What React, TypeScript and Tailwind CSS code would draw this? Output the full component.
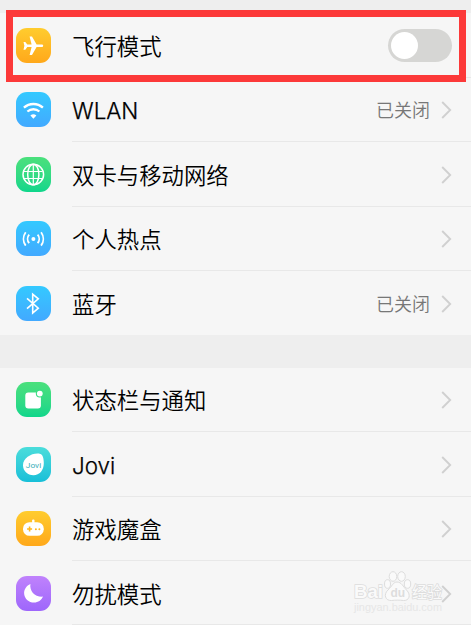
import type { ReactNode } from "react";

const white = "#ffffff";

function Plane() {
  return (
    <path
      fill={white}
      d="M27.2 17.8c0 .9-.7 1.300-1.600 1.300h-5l-4.600 7.900h-2.400l2-7.900h-4.300l-2 2.600H7.500l.9-3.900-.9-3.900h1.800l2 2.600h4.300l-2-7.900h2.400l4.600 7.900h5c.9 0 1.600.4 1.600 1.300z"
    />
  );
}

function Wifi() {
  return (
    <g fill="none" stroke={white} strokeWidth="2.3">
      <path d="M7.9 15.7a14 14 0 0 1 19 0" />
      <path d="M11.4 19.5a9.2 9.2 0 0 1 12 0" />
      <path d="M17.4 26.8l-3-3.2a4.4 4.4 0 0 1 6 0z" fill={white} stroke="none" />
    </g>
  );
}

function Globe() {
  return (
    <g fill="none" stroke={white} strokeWidth="1.5">
      <circle cx="17.3" cy="17.5" r="10.3" />
      <ellipse cx="17.3" cy="17.5" rx="5.6" ry="10.3" />
      <path d="M17.3 7.2v20.6M8 14.5h18.600M8 21.500h18.600" strokeWidth="1.2" />
    </g>
  );
}

function Hotspot() {
  return (
    <g fill="none" stroke={white} strokeWidth="1.8">
      <circle cx="17.4" cy="17.9" r="2" fill={white} stroke="none" />
      <path d="M13.2 13.7a6.4 6.4 0 0 0 0 8.4M21.6 13.7a6.4 6.4 0 0 1 0 8.4" />
      <path d="M9.7 11.2a11.4 11.4 0 0 0 0 13.4M25.1 11.2a11.4 11.4 0 0 1 0 13.4" />
    </g>
  );
}

function Bluetooth() {
  return <path d="M11 12.3l11.3 9.9-5.6 4.9V8.1l5.6 4.7L11 22.6" fill="none" stroke={white} strokeWidth="1.6" />;
}

function Notify() {
  return (
    <g>
      <rect x="9.3" y="10.4" width="15.6" height="16.2" rx="3" fill={white} />
      <circle cx="23.8" cy="11.6" r="4" fill="#3bdc82" />
      <circle cx="23.8" cy="11.6" r="2.9" fill={white} />
    </g>
  );
}

function Jovi() {
  return (
    <g>
      <path fill={white} d="M24.3 6.9c2.4.5 3.5 4.4 3.5 9.3 0 7-4.2 12-10.3 12S7 23.9 7 18.3C7 10.5 17 5.3 24.3 6.900z" />
      <text x="9.8" y="20.6" fontSize="6.8" textLength="15.400" lengthAdjust="spacingAndGlyphs" fill="#35aeb9" className="font-['Roboto',sans-serif] font-normal">
        Jovi
      </text>
    </g>
  );
}

function Gamepad() {
  return (
    <g>
      <rect x="7" y="11.2" width="20.8" height="13.6" rx="6.5" fill={white} />
      <rect x="16.1" y="8.6" width="2.4" height="4" rx="1" fill={white} />
      <path d="M13.6 15.5v5M11.1 18h5" stroke="#ffb71d" strokeWidth="1.6" />
      <circle cx="19.9" cy="18.2" r="1" fill="#ffb71d" />
      <circle cx="23.4" cy="18.2" r="1" fill="#ffb71d" />
    </g>
  );
}

function Moon() {
  return <path fill={white} d="M14.4 7.9c-1 7 4.2 13.2 12.6 12.7-1.5 3.7-4.9 6-8.8 6-5.5 0-10.1-4-10.1-9.6 0-4 2.5-7.5 6.3-9.1z" />;
}

const yellow = "from-[#ffcc2e] to-[#ffa81a]";
const blue = "from-[#33c9ff] to-[#42a9ff]";
const green = "from-[#4ae07c] to-[#0dd68b]";

type Item = { label: string; icon: ReactNode; tone: string; row: string; latin?: boolean; status?: string; toggle?: boolean };

const tall = "h-[65px] pt-[15px]";
const short = "h-16 pt-[14px]";

const network: Item[] = [
  { label: "飞行模式", icon: <Plane />, tone: yellow, row: tall, toggle: true },
  { label: "WLAN", icon: <Wifi />, tone: blue, row: short, latin: true, status: "已关闭" },
  { label: "双卡与移动网络", icon: <Globe />, tone: green, row: tall },
  { label: "个人热点", icon: <Hotspot />, tone: blue, row: short },
  { label: "蓝牙", icon: <Bluetooth />, tone: blue, row: "h-16 pt-[15px]", status: "已关闭" },
];

const system: Item[] = [
  { label: "状态栏与通知", icon: <Notify />, tone: green, row: short },
  { label: "Jovi", icon: <Jovi />, tone: "from-[#4adddb] to-[#16bfd8]", row: tall, latin: true },
  { label: "游戏魔盒", icon: <Gamepad />, tone: yellow, row: short },
  { label: "勿扰模式", icon: <Moon />, tone: "from-[#c082fc] to-[#9e66fb]", row: "h-16 pt-[15px]" },
];

function Row({ item, divider }: { item: Item; divider: boolean }) {
  return (
    <div className={`relative flex items-start pl-4 pr-5 ${item.row}`}>
      <div className={`size-[35px] shrink-0 overflow-hidden rounded-[11px] bg-linear-to-b ${item.tone}`}>
        <svg viewBox="0 0 35 35" className="size-full">{item.icon}</svg>
      </div>
      <div className="ml-[21px] flex h-[35px] flex-1 items-center">
        <span className={item.latin ? "pt-[3px] font-['Inter',sans-serif] text-[22.4px] font-light leading-8 text-black [-webkit-text-stroke:0.25px_black]" : "pb-0.5 text-[22.4px] font-[350] leading-8 text-black"}>
          {item.label}
        </span>
        <span className="ml-auto pb-px text-[18px] font-[350] leading-6 text-[#777]">{item.status}</span>
        {item.toggle ? (
          <span className="-mr-px flex h-[33px] w-16 items-center rounded-full bg-[#d6d6d4] pl-[2.5px]">
            <span className="size-[27px] rounded-full bg-white" />
          </span>
        ) : (
          <svg viewBox="0 0 11 18" className="-mr-px ml-[11px] h-[18px] w-[11px]">
            <path d="M1.2 1l8 8-8 8" fill="none" stroke="#d0d0d0" strokeWidth="1.9" />
          </svg>
        )}
      </div>
      {divider && <div className="absolute right-0 bottom-0 left-[72px] h-px bg-[#e8e8e8]" />}
    </div>
  );
}

function Watermark() {
  return (
    <div className="absolute top-[570px] left-[353px] h-[44px] w-[94px] font-['Liberation_Sans','Noto_Sans_CJK_SC',sans-serif]">
      <svg viewBox="0 0 94 44" className="size-full">
        <g fill="#fafafa" stroke="#dddddd" strokeWidth="1">
          <ellipse cx="34.500" cy="14" rx="3" ry="4.300" />
          <ellipse cx="40" cy="6.500" rx="3.800" ry="4.800" />
          <ellipse cx="48.500" cy="6.500" rx="3.800" ry="4.800" />
          <ellipse cx="54.500" cy="14" rx="3.200" ry="4.300" />
          <path d="M44 12c4.500 0 6 4.500 9.500 8 5 5 2.500 11-3 10.500-4-.5-8-.5-12 0-6 .5-8.500-6-3.500-10.500 4-3.500 5-8 9-8z" />
          <g strokeWidth="1.6" paintOrder="stroke">
            <text x="1" y="28" fontSize="19" fontWeight="700" textLength="29" lengthAdjust="spacingAndGlyphs">Bai</text>
            <text x="59" y="28" fontSize="16" textLength="30" lengthAdjust="spacingAndGlyphs">经验</text>
          </g>
          <text x="37.500" y="27" fontSize="12" fontWeight="700" fill="#dddddd" stroke="none">du</text>
        </g>
        <text x="1" y="41" fontSize="10.500" textLength="88" lengthAdjust="spacingAndGlyphs" fill="#e6e6e6">jingyan.baidu.com</text>
      </svg>
    </div>
  );
}

export default function App() {
  return (
    <main className="relative h-[625px] w-[471px] overflow-hidden bg-[#eeeeee] pt-[13px] font-['Noto_Sans_CJK_SC',sans-serif]">
      <section className="h-[322px] bg-[#f6f6f6]">
        {network.map((item, i) => <Row key={item.label} item={item} divider={i < network.length - 1} />)}
      </section>
      <section className="mt-[33px] bg-[#f6f6f6]">
        {system.map((item) => <Row key={item.label} item={item} divider />)}
      </section>
      <div className="absolute top-[10px] left-[6px] h-[72px] w-[460px] border-7 border-[#fc3939]" />
      <Watermark />
    </main>
  );
}
